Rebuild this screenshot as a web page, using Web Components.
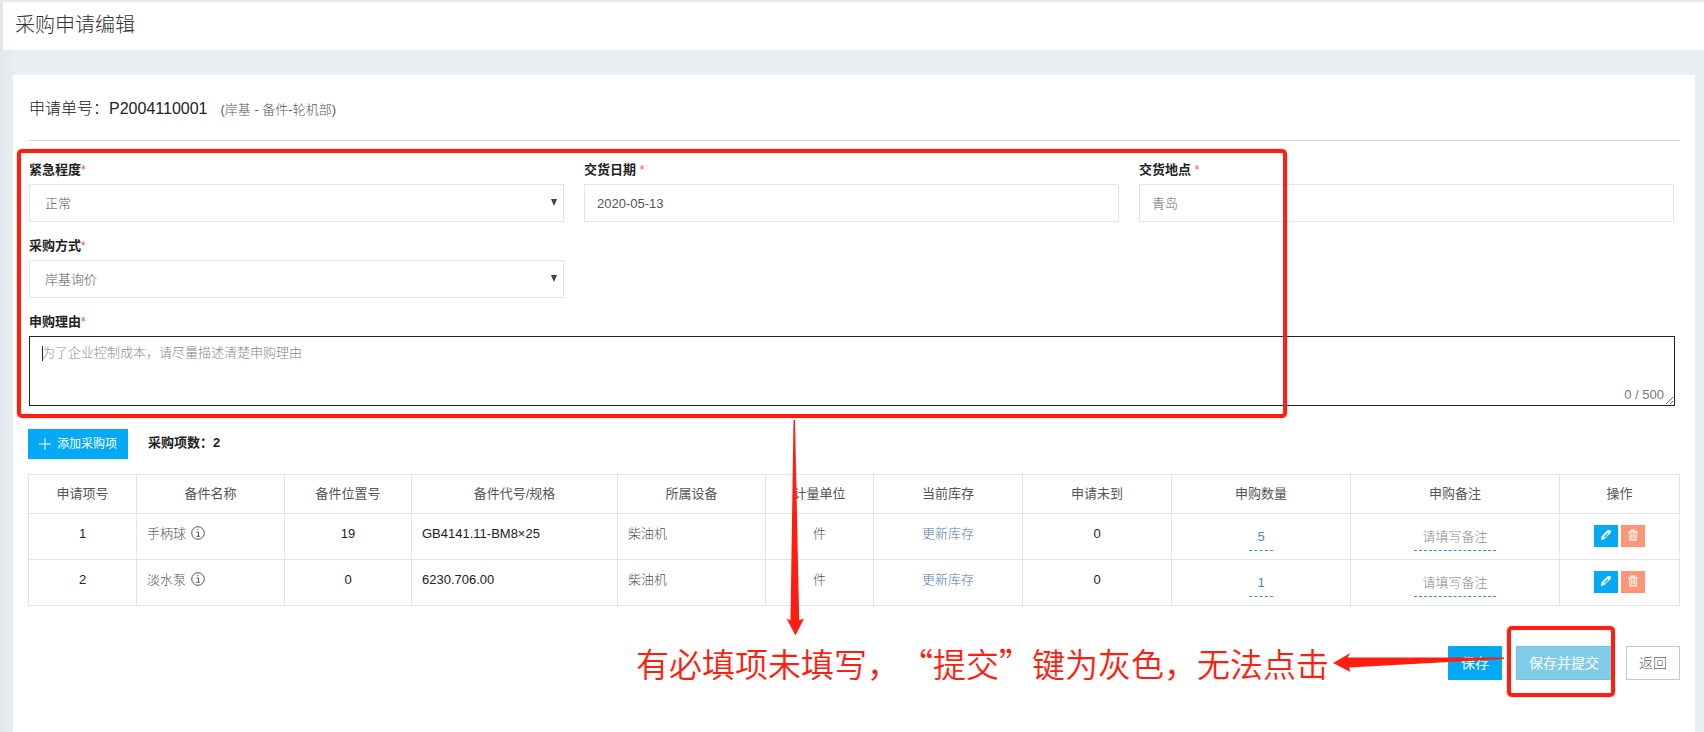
<!DOCTYPE html>
<html lang="zh-CN">
<head>
<meta charset="utf-8">
<title>采购申请编辑</title>
<style>
  html, body { margin: 0; }
  body {
    font: 13px/20px "Liberation Sans", "Noto Sans CJK SC", sans-serif;
    color: #222;
    background: #ebeef4;
  }
</style>
</head>
<body>
<purchase-page>
  <page-header slot="header">采购申请编辑</page-header>
  <request-title number="P2004110001">(岸基 - 备件-轮机部)</request-title>
  <request-form></request-form>
  <items-toolbar count="2"></items-toolbar>
  <items-table></items-table>
  <action-bar></action-bar>
  <review-notes slot="notes">有必填项未填写，“提交”键为灰色，无法点击</review-notes>
</purchase-page>

<script>
const define = (name, html) => {
  const template = document.createElement('template');
  template.innerHTML = '<style>*{box-sizing:border-box}:host{display:block}</style>' + html;
  customElements.define(name, class extends HTMLElement {
    constructor() {
      super();
      this.attachShadow({ mode: 'open' }).append(template.content.cloneNode(true));
    }
    connectedCallback() {
      this.shadowRoot.querySelectorAll('[data-attr]').forEach(el => {
        el.textContent = this.getAttribute(el.dataset.attr);
      });
    }
  });
};

define('purchase-page', `
<style>
  :host {
    position: relative; display: flex; flex-direction: column;
    min-height: 100vh; padding-left: 3px;
    background: linear-gradient(90deg, #e2e6ec, #ebeff4 16px);
    box-sizing: border-box; overflow: hidden;
  }
  main { flex: 1; margin: 25px 9px 0 10px; padding: 0 15px 52px 16px; background: #fff; }
</style>
<slot name="header"></slot>
<main><slot></slot></main>
<slot name="notes"></slot>`);

define('page-header', `
<style>
  header { height: 50px; padding: 0 12px; background: linear-gradient(#dfe0e2, #fff 3px); }
  h1 { margin: 0; font-size: 20px; line-height: 50px; font-weight: 300; color: #333; }
</style>
<header><h1><slot></slot></h1></header>`);

define('request-title', `
<style>
  h2 {
    display: flex; align-items: baseline; margin: 0; padding: 20px 0 31px;
    border-bottom: 1px solid #d9d9d9;
    font-size: 16px; line-height: 28px; font-weight: 300; height: 66px; color: #222;
  }
  b { font-weight: 400; color: #222; }
  small { margin-left: 13px; font-size: 13px; color: #555; }
</style>
<h2>申请单号：<b data-attr="number"></b><small><slot></slot></small></h2>`);

define('request-form', `
<style>
  form { display: grid; grid-template-columns: repeat(3, 1fr); gap: 13px 20px; padding: 18px 6px 23px 0; }
  label { display: block; height: 20px; margin-bottom: 5px; line-height: 22px; font-weight: 700; color: #222; }
  i { font-style: normal; font-weight: 400; font-size: 12px; color: #f0563f; }
  .wide { grid-column: 1 / -1; margin-right: -1px; }
  .start { grid-column: 1; }
  .box { position: relative; }
  input, select, textarea {
    display: block; width: 100%; height: 38px; margin: 0; padding: 0 12px;
    border: 1px solid #e3e5e7; border-radius: 0; background: #fff;
    font: inherit; font-weight: 300; color: #555; appearance: none; outline: 0;
  }
  input { color: #555; }
  input::placeholder { color: #666; opacity: 1; }
  select { padding: 2px 15px 0; }
  .arrow { position: absolute; right: 7px; top: 15px; width: 6px; height: 7px; fill: #444; pointer-events: none; }
  textarea { height: 70px; padding: 6px 12px; border-color: #222; resize: vertical; }
  textarea::placeholder { color: #888; opacity: 1; }
  .caret { position: absolute; left: 13px; top: 10px; width: 1px; height: 15px; background: #222; }
  output { position: absolute; right: 11px; bottom: 1px; color: #777; }
</style>
<form>
  <div>
    <label for="urgency">紧急程度<i>*</i></label>
    <div class="box"><select id="urgency"><option>正常</option></select>
      <svg class="arrow" viewBox="0 0 6 7"><path d="M0 0h6L3 7z"/></svg></div>
  </div>
  <div>
    <label for="date">交货日期 <i>*</i></label>
    <input id="date" value="2020-05-13">
  </div>
  <div>
    <label for="place">交货地点 <i>*</i></label>
    <input id="place" placeholder="青岛">
  </div>
  <div class="start">
    <label for="method">采购方式<i>*</i></label>
    <div class="box"><select id="method"><option>岸基询价</option></select>
      <svg class="arrow" viewBox="0 0 6 7"><path d="M0 0h6L3 7z"/></svg></div>
  </div>
  <div class="wide">
    <label for="reason">申购理由<i>*</i></label>
    <div class="box">
      <textarea id="reason" placeholder="为了企业控制成本，请尽量描述清楚申购理由"></textarea>
      <span class="caret"></span>
      <output for="reason">0 / 500</output>
    </div>
  </div>
</form>`);

define('items-toolbar', `
<style>
  :host { display: flex; align-items: center; gap: 20px; margin: 0 0 15px -1px; }
  button {
    display: flex; align-items: center; gap: 6px; height: 30px; padding: 0 11px; border: 0;
    background: #03a9f4; color: #fff; font: inherit; font-size: 12px;
  }
  svg { width: 12px; height: 12px; stroke: #fff; }
  strong { line-height: 26px; margin-bottom: 2px; color: #222; }
</style>
<button type="button"><svg viewBox="0 0 12 12"><path d="M6 0v12M0 6h12"/></svg>添加采购项</button>
<strong>采购项数：<span data-attr="count"></span></strong>`);

const row = (no, name, place, code, qty) => `
<tr>
  <td class="n">${no}</td>
  <td class="l">${name} <svg class="info" viewBox="0 0 14 14"><circle cx="7" cy="7" r="6.300"/><path d="M5.500 6h2v4M5.300 10.300h3.600M6.400 3.400h1.200"/></svg></td>
  <td class="n">${place}</td>
  <td class="l n">${code}</td>
  <td class="l">柴油机</td>
  <td>件</td>
  <td><a href="#">更新库存</a></td>
  <td class="n">0</td>
  <td class="edit"><a href="#" class="qty">${qty}</a></td>
  <td class="edit"><a href="#" class="memo">请填写备注</a></td>
  <td class="ops"><div>
    <button type="button" aria-label="编辑"><svg viewBox="0 0 14 14"><path fill="#fff" fill-rule="evenodd" d="M1 13.200l.9-4.700L8.800 1.600c1.100-1.100 2.500-1 3.400-.1.900.9 1 2.300-.1 3.400L5.200 11.800zM4.700 8.800l1 1L9.900 5.600l-1-1z"/></svg></button>
    <button type="button" aria-label="删除" class="del"><svg viewBox="0 0 14 14"><path fill="none" stroke="#fff" stroke-width="1.300" d="M1.500 3.300h11M5 3V1.300h4V3M3.200 4v8.700h7.600V4"/><path stroke="#fff" d="M5.300 5v6M7 5v6M8.700 5v6"/></svg></button>
  </div></td>
</tr>`;

define('items-table', `
<style>
  :host { margin-left: -1px; }
  table { width: 100%; table-layout: fixed; border-collapse: collapse; }
  th, td { border: 1px solid #e3e5e8; padding: 0 10px; text-align: center; font-weight: 400; white-space: nowrap; }
  th { height: 39px; color: #555; }
  td { height: 46px; padding: 10px 10px 0; vertical-align: top; color: #555; font-weight: 300; }
  .n { color: #222; font-weight: 400; }
  .l { text-align: left; }
  .edit { padding-top: 13px; }
  a { color: #5079b5; text-decoration: none; }
  a.qty, a.memo { display: inline-block; height: 24px; padding: 0 8px; border-bottom: 1px dashed #428bca; color: #428bca; }
  a.memo { color: #888; }
  .info { width: 14px; height: 14px; margin-left: 1px; vertical-align: -2px; fill: none; stroke: #555; }
  .ops { padding-top: 11px; }
  .ops div { display: flex; justify-content: center; gap: 3px; }
  button { display: flex; justify-content: center; width: 24px; height: 22px; padding: 4px 0 0; border: 0; background: #03a9f4; }
  button.del { background: #fb967a; }
  button svg { width: 12px; height: 12px; }
</style>
<table>
  <colgroup><col style="width:108px"><col style="width:148px"><col style="width:127px"><col style="width:206px"><col style="width:148px"><col style="width:108px"><col style="width:149px"><col style="width:149px"><col style="width:179px"><col style="width:209px"><col style="width:120px"></colgroup>
  <thead><tr><th>申请项号</th><th>备件名称</th><th>备件位置号</th><th>备件代号/规格</th><th>所属设备</th><th>计量单位</th><th>当前库存</th><th>申请未到</th><th>申购数量</th><th>申购备注</th><th>操作</th></tr></thead>
  <tbody>${row(1, '手柄球', '19', 'GB4141.11-BM8×25', '5')}${row(2, '淡水泵', '0', '6230.706.00', '1')}</tbody>
</table>`);

define('action-bar', `
<style>
  :host { display: flex; justify-content: flex-end; gap: 14px; margin-top: 40px; }
  button {
    height: 34px; padding: 0 12px; border: 1px solid #03a9f4; background: #03a9f4;
    color: #fff; font: inherit; font-size: 14px;
  }
  button:disabled { background: #7fcde8; border-color: #6fc4e2; }
  .back { background: #fff; border-color: #c8c8c8; color: #666; font-weight: 300; }
</style>
<button type="button">保存</button>
<button type="button" disabled>保存并提交</button>
<button type="button" class="back">返回</button>`);

define('review-notes', `
<style>
  :host { position: absolute; inset: 0; pointer-events: none; }
  .frame { position: absolute; border: 4px solid #ff1e10; border-radius: 5px; box-shadow: 0 0 1px #ff1e10; }
  .required { left: 17px; top: 149px; width: 1270px; height: 269px; }
  .submit { right: 89px; top: 626px; width: 108px; height: 71px; }
  svg { position: absolute; fill: #ff1e10; }
  .down { left: 785px; top: 420px; width: 20px; height: 216px; }
  .left { right: 200px; top: 652px; width: 172px; height: 22px; }
  p {
    position: absolute; right: 375px; top: 639px; margin: 0; white-space: nowrap;
    font: 350 33px/48px "Noto Sans CJK SC", sans-serif; color: #ff1e10;
    text-spacing-trim: space-all;
  }
</style>
<div class="frame required"></div>
<svg class="down" viewBox="0 0 20 216"><path d="M8.500 0h1.500L14.200 200.500l4.800-2L10.500 215.500 1.500 198.500l4 2z"/></svg>
<div class="frame submit"></div>
<svg class="left" viewBox="0 0 172 22"><path d="M172 5.500v1.500L17 15.500l1.500 4.500L1 11 18.500 1 15.500 5.500z"/></svg>
<p><slot></slot></p>`);
</script>
</body>
</html>
